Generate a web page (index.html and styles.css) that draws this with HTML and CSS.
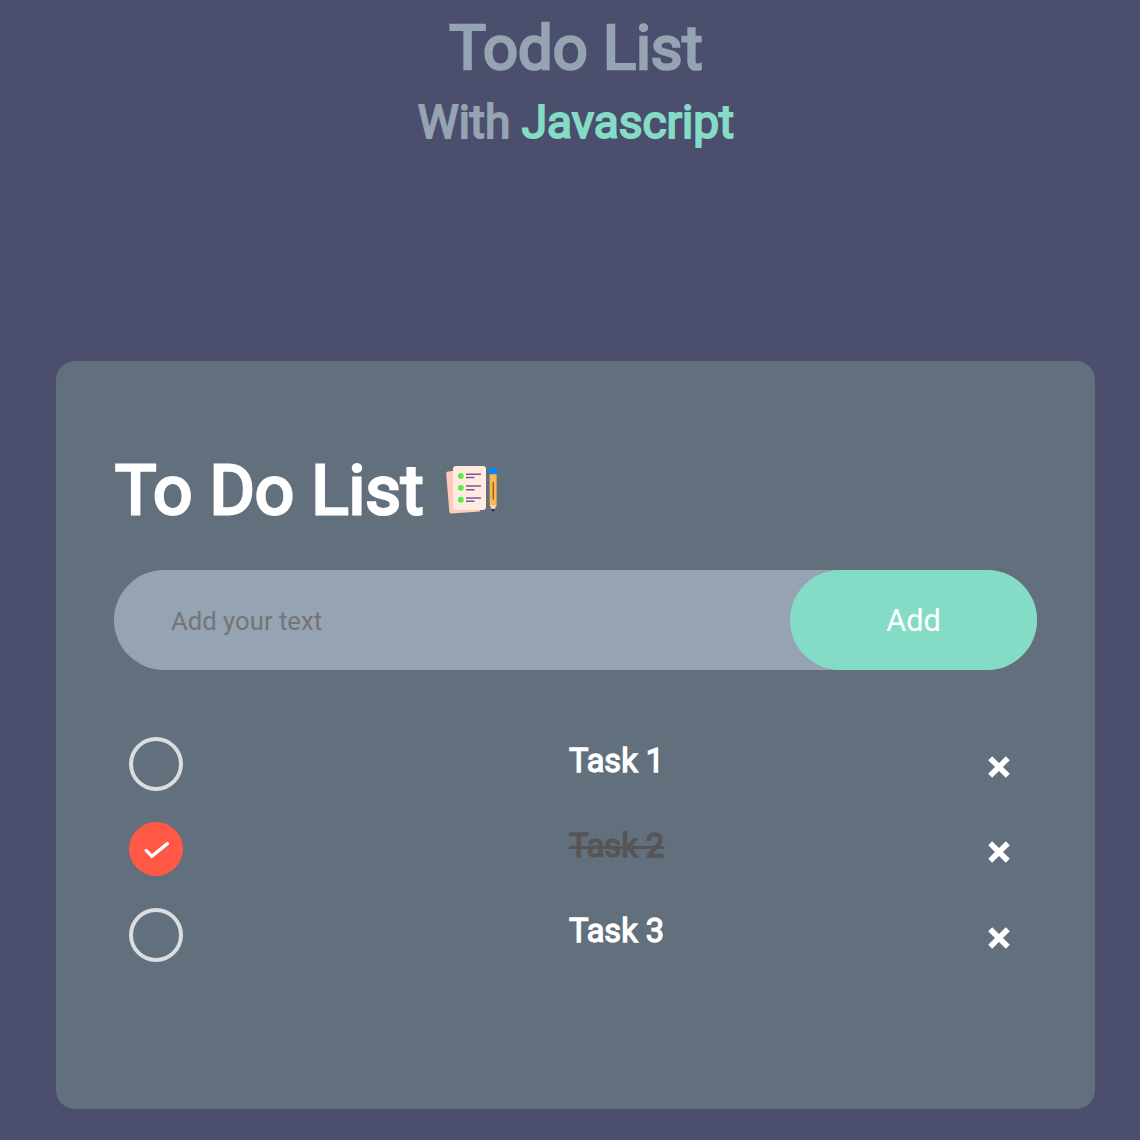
FILE: index.html
```html
<!DOCTYPE html>
<html lang="en">
<head>
<meta charset="utf-8">
<title>Todo List</title>
<link rel="stylesheet" href="styles.css">
</head>
<body>
<header class="header">
  <h1 class="title">Todo List</h1>
  <h2 class="subtitle">With <span class="accent">Javascript</span></h2>
</header>
<main class="card">
  <h2 class="card-title">To Do List
    <svg class="list-icon" viewBox="0 0 54 50" aria-hidden="true">
      <path d="M3 5.500 29 2.500 35 45.500 6.500 47.500Q4.500 47.700 4.300 45.500L1.200 8Q1 5.700 3 5.500Z" fill="#ffc9bb"/>
      <rect x="8" y="0" width="33" height="44" rx="3" fill="#ffebe0"/>
      <g fill="#54f041"><circle cx="15.800" cy="10" r="2.900"/><circle cx="15.800" cy="21.800" r="2.900"/><circle cx="15.800" cy="33.700" r="2.900"/></g>
      <path d="M21 8.200H36M21 11.500H29.500M21 20H36M21 23.700H29.500M21 32H36M21 35.300H29.500" stroke="#75589a" stroke-width="1.500"/>
      <path d="M44.600 8h7v31.500h-7z" fill="#ffb850"/>
      <path d="M44.400 3.500q0-1.500 1.500-1.500h4.600q1.500 0 1.500 1.500v4.800h-7.600z" fill="#0587ff"/>
      <path d="M44.600 39h7l-2.300 5h-2.400z" fill="#ffc9bb"/>
      <path d="M46.300 43h3.600L48.100 46z" fill="#222"/>
      <path d="M48.200 16v17.500" stroke="#5a4219" stroke-width="1"/>
    </svg>
  </h2>
  <form class="entry">
    <input class="entry-input" type="text" placeholder="Add your text">
    <button class="entry-button" type="button">Add</button>
  </form>
  <ul class="tasks">
    <li class="task">
      <span class="check"></span><span class="label">Task 1</span>
      <svg class="close" viewBox="0 0 22 22"><path d="M2.200 2.200l17.600 17.600M19.800 2.200L2.200 19.800"/></svg>
    </li>
    <li class="task done">
      <span class="check"><svg class="tick" viewBox="0 0 26 18"><path d="M2.300 9.400 7.800 15.300 23.300 2.600"/></svg></span><span class="label">Task 2</span>
      <svg class="close" viewBox="0 0 22 22"><path d="M2.200 2.200l17.600 17.600M19.800 2.200L2.200 19.800"/></svg>
    </li>
    <li class="task">
      <span class="check"></span><span class="label">Task 3</span>
      <svg class="close" viewBox="0 0 22 22"><path d="M2.200 2.200l17.600 17.600M19.800 2.200L2.200 19.800"/></svg>
    </li>
  </ul>
</main>
</body>
</html>
```
FILE: styles.css
```css
* { box-sizing: border-box; margin: 0; padding: 0; }
body {
  height: 1140px;
  overflow: hidden;
  background: #4b4e6d;
  font-family: Roboto, sans-serif;
  color: #fff;
}
.header {
  height: 361px;
  padding: 12px 0 0 12px;
  text-align: center;
  color: #95a3b3;
}
h1, h2 { font-weight: 400; }
.title { font-size: 61.400px; line-height: 72px; -webkit-text-stroke: 2.700px; }
.subtitle { margin-top: 11px; font-size: 46px; line-height: 54px; -webkit-text-stroke: 2px; }
.accent { color: #84dcc6; }
.card {
  width: 1039px;
  height: 748px;
  margin-left: 56px;
  padding: 89px 58px 0;
  border-radius: 19px;
  background: #626f7c;
}
.card-title {
  display: flex;
  align-items: center;
  gap: 21px;
  height: 81px;
  padding-left: 1px;
  font-size: 69.100px;
  -webkit-text-stroke: 3px;
}
.list-icon { width: 54px; height: 50px; }
.entry {
  display: flex;
  height: 100px;
  margin-top: 39px;
  border-radius: 50px;
  background: #95a3b3;
}
.entry-input {
  flex: 1;
  min-width: 0;
  padding: 2px 57px 0;
  border: 0;
  outline: 0;
  background: transparent;
  font: 25.700px Roboto, sans-serif;
}
.entry-input::placeholder { color: #757575; }
.entry-button {
  width: 247px;
  border: 0;
  border-radius: 50px;
  background: #84dcc6;
  color: #fff;
  font: 30.700px Roboto, sans-serif;
}
.tasks {
  display: grid;
  grid-auto-rows: 54px;
  row-gap: 31.400px;
  margin-top: 67px;
  padding: 0 27px 0 15px;
  list-style: none;
}
.task {
  display: grid;
  grid-template-columns: 440px 1fr 22px;
  align-items: center;
}
.check {
  display: flex;
  align-items: center;
  justify-content: center;
  width: 54px;
  height: 54px;
  border: 4px solid #dcdddf;
  border-radius: 50%;
}
.done .check { border-color: #ff5945; background: #ff5945; }
.tick { width: 26px; height: 18px; margin: 2px 0 0 1px; }
.tick path { fill: none; stroke: #fff; stroke-width: 3.300; stroke-linecap: round; }
.label {
  padding-bottom: 7px;
  font-size: 32.600px;
  -webkit-text-stroke: 1.300px;
}
.done .label {
  color: #555;
  text-decoration: line-through;
  text-decoration-thickness: 3px;
}
.close { width: 22px; height: 22px; margin-top: 6px; }
.close path { stroke: #fff; stroke-width: 5.600; }
```
